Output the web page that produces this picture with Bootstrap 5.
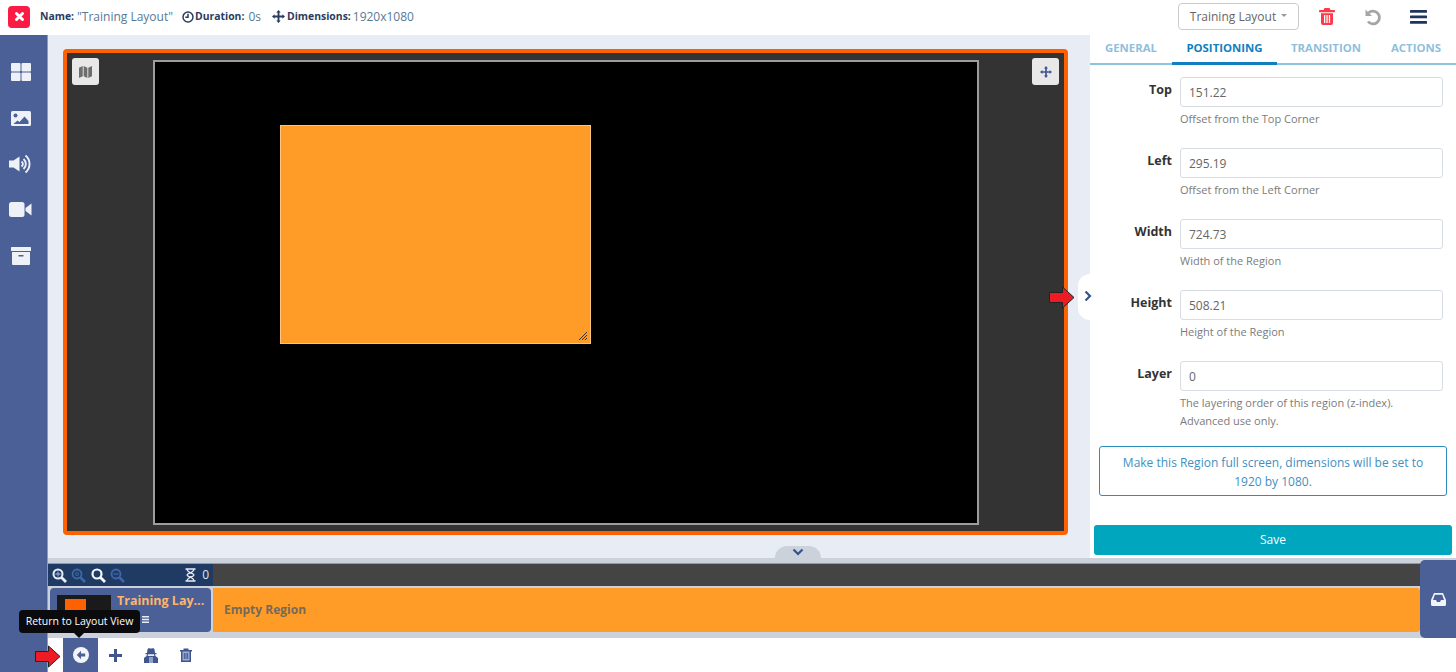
<!DOCTYPE html>
<html lang="en">
<head>
  <meta charset="UTF-8" />
  <title>Layout Editor</title>
  <link href="https://cdn.jsdelivr.net/npm/bootstrap@5.3.2/dist/css/bootstrap.min.css" rel="stylesheet" />
  <style>
    html, body { height: 100%; overflow: hidden; }
    body { font-family: "Open Sans", sans-serif; font-size: 12px; color: #283a5e; background: #fff; }

    /* top bar */
    .top-strip { height: 35px; padding-left: 8px; padding-right: 29px; padding-bottom: 2px; }
    .close-box { width: 22px; height: 22px; background: #fb1c46; border-radius: 4px; margin-right: 10px; }
    .meta-key { font-weight: 700; color: #2b3d5f; font-size: 10.400px; }
    .meta-val { color: #557a96; font-size: 12px; }
    .name-key { margin-right: 3px; }
    .clock-icon { margin: 0 1px 0 9px; }
    .dur-key { margin-right: 4px; }
    .move-icon { margin: 0 2px 0 11px; }
    .dim-key { margin-right: 2px; }
    .picker { width: 121px; height: 27px; font-size: 12px; color: #666; border: 1px solid #ccc; border-radius: 4px; background: #fff; padding: 0; margin-right: 20px; }
    .picker::after { color: #999; margin-left: 5px; }
    .trash-top { margin-right: 29px; }
    .undo-top { margin-right: 28px; }

    /* sidebar */
    .side-rail { width: 48px; background: #4b6096; padding-top: 27px; gap: 26px; padding-right: 6px; border-right: 1px solid #8d9bc0; flex-shrink: 0; }
    .rail-slot { height: 20px; display: flex; align-items: center; }

    /* viewer */
    .mid-row { min-height: 0; }
    .mid-col { min-width: 0; }
    .work-row { height: 523px; }
    .viewer-area { background: #e8ecf5; padding: 14px 22px 23px 15px; min-width: 0; position: relative; }
    .viewer-box { height: 100%; background: #333; border: 4px solid #fd6100; border-radius: 4px; position: relative; }
    .stage { width: 826px; height: 465px; background: #000; border: 2px solid #9d9d9d; position: relative; }
    .drop-region { position: absolute; left: 125px; top: 63px; width: 311px; height: 219px; background: #ff9c27; border: 1px solid #ffc57d; }
    .grip { position: absolute; right: 3px; bottom: 3px; }
    .corner-btn { position: absolute; top: 5px; width: 27px; height: 27px; background: #e8e8e8; border-radius: 3px; }
    .corner-map { left: 5px; }
    .corner-move { right: 5px; }
    .drawer-tab { position: absolute; bottom: 0; left: 727px; width: 46px; height: 12px; background: #cbd2db; border-radius: 12px 12px 0 0; }
    .panel-tab { position: absolute; right: 0; top: 239px; width: 12px; height: 46px; background: #fff; border-radius: 12px 0 0 12px; }
    .panel-chevron { position: absolute; left: -6px; top: 255px; z-index: 5; }

    /* properties panel */
    .prop-panel { width: 366px; flex-shrink: 0; position: relative; background: #fff; }
    .tab-row { height: 30px; border-bottom: 2px solid #8fc3de; }
    .tab-link { font-weight: 700; font-size: 11.400px; color: #8fbfdb; text-decoration: none; height: 30px; line-height: 25px; text-align: center; display: block; }
    .tab-link.on { color: #117fc0; border-bottom: 3px solid #117fc0; }
    .tab-general { width: 82px; }
    .tab-positioning { width: 105px; }
    .tab-transition { width: 90px; padding-left: 8px; }
    .tab-actions { width: 89px; padding-left: 9px; }
    .field-row { height: 71px; padding-right: 13px; }
    .field-row-tall { height: 83px; }
    .field-name { width: 82px; text-align: right; font-weight: 700; font-size: 12.500px; color: #333; padding-top: 4px; margin-right: 8px; flex-shrink: 0; line-height: 18px; }
    .field-input { height: 30px; font-size: 12px; color: #666; padding: 4px 8px; border-color: #d8dde3; border-radius: 3px; }
    .field-help { font-size: 11px; color: #7b7b7b; margin-top: 3px; line-height: 18px; }
    .fields-box { padding-top: 12px; }
    .fullscreen-btn { display: block; width: 348px; height: 50px; margin: 2px 0 0 9px; font-size: 12px; line-height: 19px; color: #3f8fc0; background: #fff; border: 1px solid #2c8cbd; border-radius: 3px; padding: 5px 14px 3px; }
    .save-btn { display: block; width: 358px; height: 30px; margin: 29px 0 0 4px; background: #00a6bd; color: #fff; border: 0; border-radius: 3px; font-size: 12px; padding: 0; }

    /* timeline */
    .tl-wrap { height: 80px; background: #cbd2db; padding-top: 5px; position: relative; }
    .tl-top { height: 23px; background: #444; border-top: 1px solid #999; }
    .tl-tools { width: 165px; background: #1f3a63; color: #dfe6f0; padding: 0 4px 0 4px; gap: 4px; font-size: 12px; }
    .glass-gap { margin-left: 1px; }
    .hourglass { margin-right: 2px; }
    .tl-row { height: 44px; margin-top: 2px; padding-left: 2px; }
    .layer-card { width: 161px; background: #4b6096; border-radius: 4px; margin-right: 2px; padding: 7px 0 0 7px; position: relative; }
    .layer-thumb { width: 54px; height: 37px; background: #1a1a1a; flex-shrink: 0; padding: 4px 0 0 8px; }
    .layer-mini { width: 21px; height: 14px; background: #fd6100; }
    .layer-title { font-weight: 700; font-size: 12.500px; color: #fdb56c; margin: -3px 0 0 6px; line-height: 18px; white-space: nowrap; }
    .layer-list { position: absolute; left: 92px; top: 27px; }
    .empty-strip { background: #ff9c27; color: #76695a; font-weight: 700; font-size: 12px; border-radius: 0 3px 3px 0; padding-left: 11px; margin-right: 36px; }
    .tray-tab { position: absolute; right: 0; top: 2px; width: 36px; height: 78px; background: #4b6096; border-radius: 5px 0 0 5px; }

    /* bottom bar */
    .action-bar { height: 34px; padding-left: 15px; }
    .action-item { width: 35px; height: 34px; }
    .action-item.on { background: #4b6096; }

    /* overlays */
    .red-arrow { position: absolute; z-index: 20; }
    .arrow-right { left: 1049px; top: 286px; }
    .arrow-bottom { left: 35px; top: 645px; }
    .hint-tip { position: absolute; left: 19px; top: 610px; width: 121px; height: 23px; background: #0b0b0d; color: #fff; border-radius: 4px; font-size: 10.500px; line-height: 23px; text-align: center; z-index: 15; white-space: nowrap; }
    .hint-tip::after { content: ""; position: absolute; left: 55px; top: 23px; border: 5px solid transparent; border-top-color: #0b0b0d; border-bottom: 0; }
  </style>
</head>
<body>
<div class="d-flex flex-column h-100">

  <!-- top bar -->
  <header class="top-strip d-flex align-items-center flex-shrink-0">
    <div class="close-box d-flex align-items-center justify-content-center">
      <svg width="11" height="11" viewBox="0 0 11 11"><path d="M2.500 2.500l6 6M8.500 2.500l-6 6" stroke="#fff" stroke-width="3" stroke-linecap="round"/></svg>
    </div>
    <span class="meta-key name-key">Name:</span><span class="meta-val">"Training Layout"</span>
    <svg class="clock-icon" width="12" height="12" viewBox="0 0 12 12" fill="none" stroke="#2b3d5f" stroke-width="1.500"><circle cx="6" cy="6" r="5"/><path d="M6 2.800v3.500H3.300"/></svg>
    <span class="meta-key dur-key">Duration:</span><span class="meta-val">0s</span>
    <svg class="move-icon" width="13" height="13" viewBox="0 0 14 14" fill="#2b3d5f"><path d="M7 0l2.400 2.800H8v3.200h3.200V4.600L14 7l-2.800 2.400V8H8v3.200h1.400L7 14l-2.400-2.800H6V8H2.800v1.400L0 7l2.800-2.400V6H6V2.800H4.600z"/></svg>
    <span class="meta-key dim-key">Dimensions:</span><span class="meta-val">1920x1080</span>

    <div class="ms-auto d-flex align-items-center">
      <button class="picker dropdown-toggle" type="button">Training Layout</button>
      <svg class="trash-top" width="16" height="17" viewBox="0 0 16 17" fill="#fb3a4a"><path d="M5.500 0h5l1 2H15a.8.8 0 0 1 0 2.200H1A.8.8 0 0 1 1 2h3.500zM2 5.300h12V15a2 2 0 0 1-2 2H4a2 2 0 0 1-2-2zM5 7v8h1.300V7zm2.400 0v8h1.300V7zm2.400 0v8h1.300V7z"/></svg>
      <svg class="undo-top" width="18" height="18" viewBox="0 0 18 18" fill="none" stroke="#a5a5a5" stroke-width="2.800"><path d="M4.500 5A6.400 6.400 0 1 1 4 13.500"/><path d="M1.500 1.500v6.500H8z" fill="#a5a5a5" stroke="none"/></svg>
      <svg width="17" height="14" viewBox="0 0 17 14" fill="#1f3560"><rect width="17" height="2.800" rx=".6"/><rect y="5.500" width="17" height="2.800" rx=".6"/><rect y="11" width="17" height="2.800" rx=".6"/></svg>
    </div>
  </header>

  <div class="mid-row d-flex flex-grow-1">
    <!-- left sidebar -->
    <aside class="side-rail d-flex flex-column align-items-center">
      <div class="rail-slot"><svg width="20" height="18" viewBox="0 0 20 18" fill="#eef1f8"><rect width="9.500" height="8.500" rx="1"/><rect x="10.500" width="9.500" height="8.500" rx="1"/><rect y="9.500" width="9.500" height="8.500" rx="1"/><rect x="10.500" y="9.500" width="9.500" height="8.500" rx="1"/></svg></div>
      <div class="rail-slot"><svg width="20" height="15" viewBox="0 0 20 15"><rect width="20" height="15" rx="1.500" fill="#eef1f8"/><circle cx="4.500" cy="4.500" r="2" fill="#4b6096"/><path d="M2.500 13l4-3.500 2 1.500 5-5.500 4 4.500V13z" fill="#4b6096"/></svg></div>
      <div class="rail-slot"><svg width="23" height="20" viewBox="0 0 23 20" fill="none"><path d="M0 6.500h4.500L10.500 2.500v15l-6-4H0z" fill="#eef1f8"/><path d="M12.500 7.500a3 3 0 0 1 0 5M14.500 5a6.500 6.500 0 0 1 0 10M16.500 1.500a11 11 0 0 1 0 17" stroke="#eef1f8" stroke-width="1.900"/></svg></div>
      <div class="rail-slot"><svg width="23" height="16" viewBox="0 0 23 16" fill="#eef1f8"><rect width="15.500" height="15" rx="2.500"/><path d="M16.500 6L22.500 1.500v12l-6-4.500z"/></svg></div>
      <div class="rail-slot"><svg width="20" height="18" viewBox="0 0 20 18" fill="#eef1f8"><rect width="20" height="4" rx=".5"/><path d="M1 5h18v12a1 1 0 0 1-1 1H2a1 1 0 0 1-1-1zm6.500 3v1.500h5V8z" fill-rule="evenodd"/></svg></div>
    </aside>

    <div class="mid-col flex-grow-1 d-flex flex-column">
      <div class="work-row d-flex">
        <!-- viewer -->
        <div class="viewer-area flex-grow-1">
          <div class="viewer-box d-flex align-items-center justify-content-center">
            <div class="stage">
              <div class="drop-region">
                <svg class="grip" width="8" height="8" viewBox="0 0 8 8" stroke="#333" stroke-width="1"><path d="M0 8L8 0M3 8l5-5M6 8l2-2"/></svg>
              </div>
            </div>
            <div class="corner-btn corner-map d-flex align-items-center justify-content-center">
              <svg width="13" height="14" viewBox="0 0 14 14" fill="#6d6d6d"><path d="M0 2.500L4 .5v11l-4 2zM5 .5l4 2v11l-4-2zM10 2.500l4-2v11l-4 2z"/></svg>
            </div>
            <div class="corner-btn corner-move d-flex align-items-center justify-content-center">
              <svg width="12" height="12" viewBox="0 0 14 14" fill="#3f5690"><path d="M7 0l2.400 2.800H8v3.200h3.200V4.600L14 7l-2.800 2.400V8H8v3.200h1.400L7 14l-2.400-2.800H6V8H2.800v1.400L0 7l2.800-2.400V6H6V2.800H4.600z"/></svg>
            </div>
          </div>
          <div class="drawer-tab d-flex align-items-center justify-content-center">
            <svg width="12" height="8" viewBox="0 0 12 8" fill="none" stroke="#2f5590" stroke-width="2.200"><path d="M1.500 1.500L6 6l4.500-4.500"/></svg>
          </div>
          <div class="panel-tab"></div>
        </div>

        <!-- right panel -->
        <div class="prop-panel">
          <svg class="panel-chevron" width="8" height="12" viewBox="0 0 8 12" fill="none" stroke="#34548a" stroke-width="2.200"><path d="M1.500 1.500L6 6l-4.500 4.500"/></svg>
          <nav class="tab-row d-flex">
            <a class="tab-link tab-general" href="#">GENERAL</a>
            <a class="tab-link tab-positioning on" href="#">POSITIONING</a>
            <a class="tab-link tab-transition" href="#">TRANSITION</a>
            <a class="tab-link tab-actions" href="#">ACTIONS</a>
          </nav>
          <div class="fields-box">
            <div class="field-row d-flex">
              <div class="field-name">Top</div>
              <div class="flex-grow-1"><input class="form-control field-input" value="151.22"><div class="field-help">Offset from the Top Corner</div></div>
            </div>
            <div class="field-row d-flex">
              <div class="field-name">Left</div>
              <div class="flex-grow-1"><input class="form-control field-input" value="295.19"><div class="field-help">Offset from the Left Corner</div></div>
            </div>
            <div class="field-row d-flex">
              <div class="field-name">Width</div>
              <div class="flex-grow-1"><input class="form-control field-input" value="724.73"><div class="field-help">Width of the Region</div></div>
            </div>
            <div class="field-row d-flex">
              <div class="field-name">Height</div>
              <div class="flex-grow-1"><input class="form-control field-input" value="508.21"><div class="field-help">Height of the Region</div></div>
            </div>
            <div class="field-row field-row-tall d-flex">
              <div class="field-name">Layer</div>
              <div class="flex-grow-1"><input class="form-control field-input" value="0"><div class="field-help">The layering order of this region (z-index).<br>Advanced use only.</div></div>
            </div>
          </div>
          <button class="fullscreen-btn" type="button">Make this Region full screen, dimensions will be set to 1920 by 1080.</button>
          <button class="save-btn" type="button">Save</button>
        </div>
      </div>

      <!-- timeline -->
      <div class="tl-wrap">
        <div class="tl-top d-flex">
          <div class="tl-tools d-flex align-items-center">
            <svg width="15" height="15" viewBox="0 0 15 15" fill="none" stroke="#e8edf5" stroke-width="2"><circle cx="6" cy="6" r="4.500"/><path d="M9.500 9.500L14 14" stroke-width="2.800"/><path d="M3.500 6h5M6 3.500v5" stroke-width="1.300" stroke="#7fa0cf"/></svg>
            <svg width="15" height="15" viewBox="0 0 15 15" fill="none" stroke="#3f68a8" stroke-width="1.800"><circle cx="6" cy="6" r="4.500"/><path d="M9.500 9.500L14 14" stroke-width="2.500"/><circle cx="6" cy="6" r="1.500" stroke-width="1"/></svg>
            <svg class="glass-gap" width="15" height="15" viewBox="0 0 15 15" fill="none" stroke="#f5f7fa" stroke-width="2.200"><circle cx="6" cy="6" r="4.500"/><path d="M9.500 9.500L14 14" stroke-width="2.800"/></svg>
            <svg width="15" height="15" viewBox="0 0 15 15" fill="none" stroke="#3f68a8" stroke-width="1.800"><circle cx="6" cy="6" r="4.500"/><path d="M9.500 9.500L14 14" stroke-width="2.500"/><path d="M3.500 6h5" stroke-width="1.300"/></svg>
            <svg class="hourglass ms-auto" width="11" height="14" viewBox="0 0 11 14" fill="none" stroke="#e8edf5" stroke-width="1.300"><path d="M.5 1h10M.5 13h10M2 1c0 4 7 4 7 6s-7 2-7 6M9 1c0 4-7 4-7 6s7 2 7 6"/></svg>
            <span>0</span>
          </div>
        </div>
        <div class="tl-row d-flex">
          <div class="layer-card d-flex">
            <div class="layer-thumb"><div class="layer-mini"></div></div>
            <div class="layer-title">Training Lay...</div>
            <svg class="layer-list" width="7" height="9" viewBox="0 0 7 9" fill="#e8edf5"><path d="M0 1h7v1.500H0zM0 3.800h7v1.500H0zM0 6.600h7v1.500H0z"/></svg>
          </div>
          <div class="empty-strip flex-grow-1 d-flex align-items-center">Empty Region</div>
        </div>
        <div class="tray-tab d-flex align-items-center justify-content-center">
          <svg width="15" height="13" viewBox="0 0 15 13" fill="#f2f4f9"><path d="M3 0h9l3 7v4.500a1.500 1.500 0 0 1-1.500 1.500h-12A1.500 1.500 0 0 1 0 11.500V7zm.8 1.800L2 7h3l1 2h3l1-2h3l-1.800-5.200z" fill-rule="evenodd"/></svg>
        </div>
      </div>

      <!-- bottom actions -->
      <div class="action-bar d-flex flex-shrink-0">
        <div class="action-item on d-flex align-items-center justify-content-center">
          <svg width="16" height="16" viewBox="0 0 16 16"><circle cx="8" cy="8" r="8" fill="#f2f4f9"/><path d="M8 3.800L3.800 8 8 12.200V9.500h4.200v-3H8z" fill="#4b6096"/></svg>
        </div>
        <div class="action-item d-flex align-items-center justify-content-center">
          <svg width="13" height="13" viewBox="0 0 13 13" fill="#3f5690"><path d="M5 0h3v5h5v3H8v5H5V8H0V5h5z"/></svg>
        </div>
        <div class="action-item d-flex align-items-center justify-content-center">
          <svg width="14" height="15" viewBox="0 0 14 15"><path d="M3.500 1.500C3.800.5 4.500 0 5.500.3c1 .3 2 .3 3 0 1-.3 1.700.2 2 1.200L11 5h1.500v1.300H11l.5 1.700L14 10v5H0v-5l2.500-2L3 6.300H1.500V5H3z" fill="#3f5690"/><path d="M3.800 6.300h6.400v1.800H3.800zM5.500 9h1v6h-1zM7.500 9h1v6h-1z" fill="#e8ecf5"/></svg>
        </div>
        <div class="action-item d-flex align-items-center justify-content-center">
          <svg width="12" height="14" viewBox="0 0 12 14"><path d="M0 2h3.500V.5h5V2H12v1.500H11V14H1V3.500H0z" fill="#3f5690"/><path d="M2.500 3.500h7V12.500h-7z" fill="#9fb0cf"/><path d="M4.300 5v6M6 5v6M7.700 5v6" stroke="#3f5690" stroke-width="1"/></svg>
        </div>
      </div>
    </div>
  </div>
</div>

<!-- annotation arrows and tooltip -->
<svg class="red-arrow arrow-right" width="26" height="23" viewBox="0 0 26 23"><path d="M.5 6.500h13V1L25 11.500 13.500 22v-5.500H.5z" fill="#ed1c24" stroke="#222"/></svg>
<svg class="red-arrow arrow-bottom" width="26" height="23" viewBox="0 0 26 23"><path d="M.5 6.500h13V1L25 11.500 13.500 22v-5.500H.5z" fill="#ed1c24" stroke="#222"/></svg>
<div class="hint-tip">Return to Layout View</div>

<script src="https://cdn.jsdelivr.net/npm/bootstrap@5.3.2/dist/js/bootstrap.bundle.min.js"></script>
</body>
</html>
